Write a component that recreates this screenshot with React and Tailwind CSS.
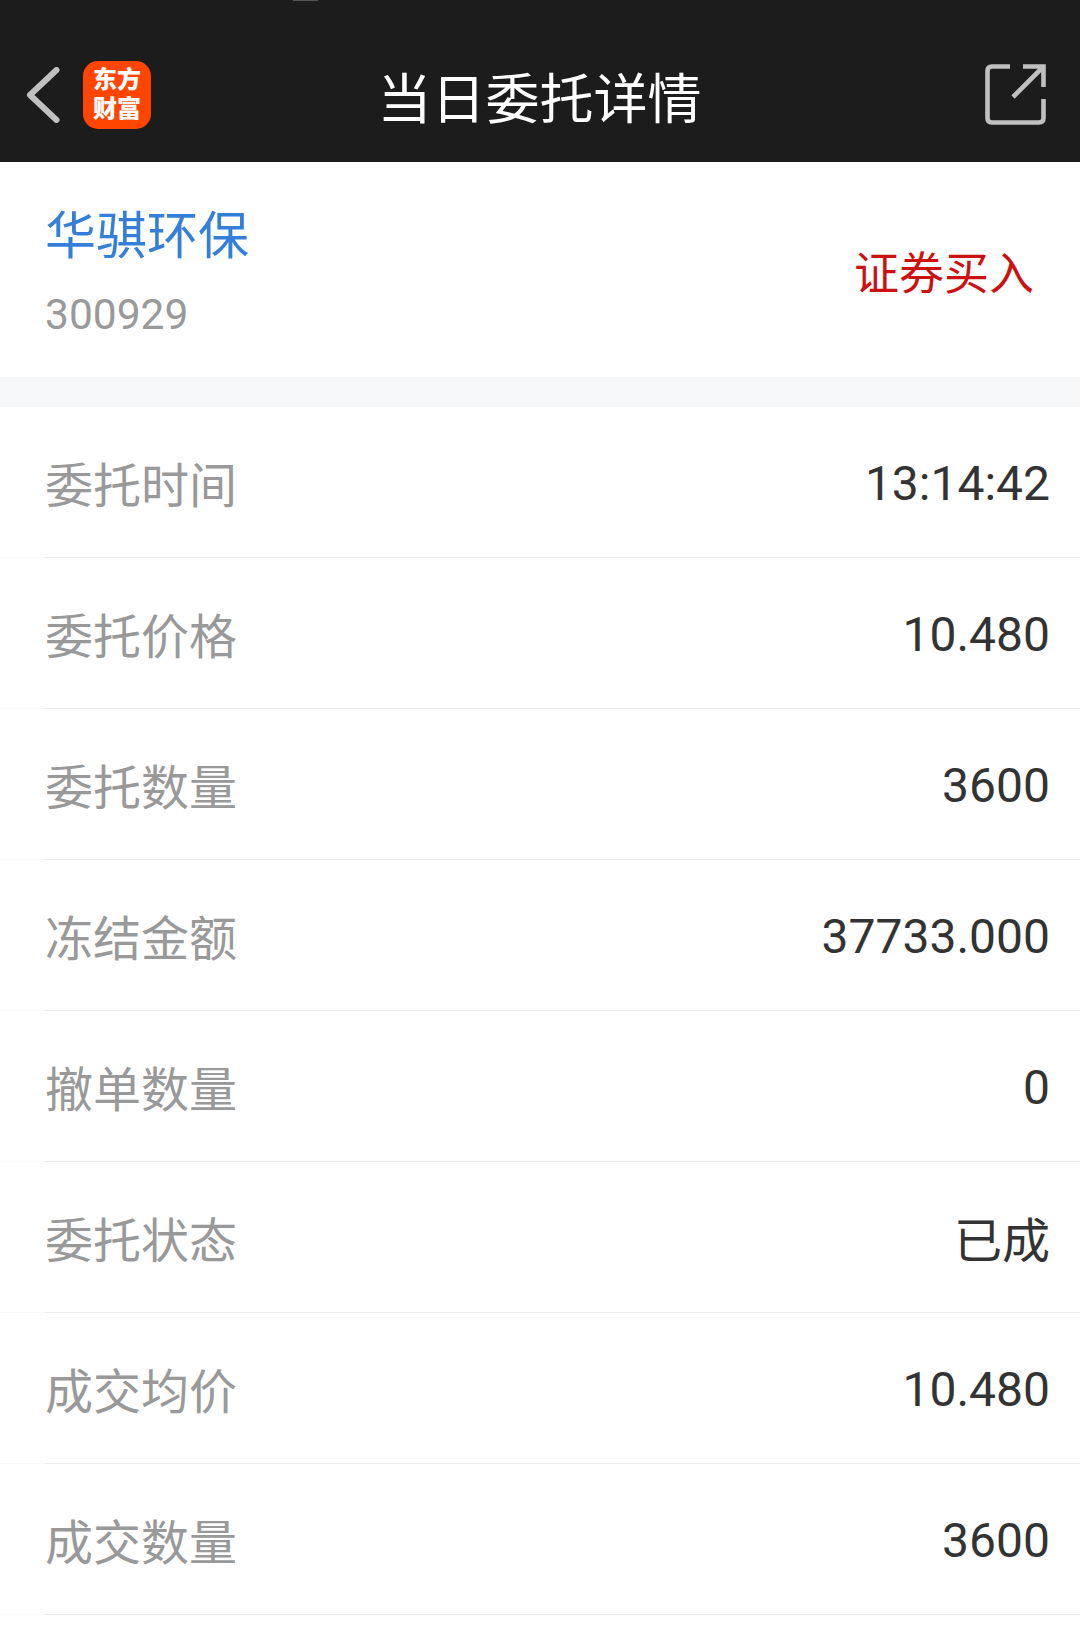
const rows = [
  { label: "委托时间", value: "13:14:42" },
  { label: "委托价格", value: "10.480" },
  { label: "委托数量", value: "3600" },
  { label: "冻结金额", value: "37733.000" },
  { label: "撤单数量", value: "0" },
  { label: "委托状态", value: "已成", isText: true },
  { label: "成交均价", value: "10.480" },
  { label: "成交数量", value: "3600" },
]

const Header = () => (
  <header className="relative flex h-[162px] items-center justify-between bg-[#1c1c1c] pt-[27px] pr-[34px] pl-[26px]">
    <div className="absolute top-0 left-[293px] h-px w-[25px] bg-[#555]" />
    <div className="flex items-center gap-[23px]">
      <svg className="h-[56px] w-[34px]" viewBox="0 0 34 56" fill="none" stroke="#c0c0c0" strokeWidth="6">
        <path d="M30.5 3L4 28L30.5 53" strokeLinejoin="round" strokeLinecap="round" />
      </svg>
      <div className="flex h-[68px] w-[68px] flex-col items-center justify-center rounded-[15px] bg-[#ff4500] text-[24px] leading-[29px] font-black text-white">
        <span>东方</span>
        <span>财富</span>
      </div>
    </div>
    <h1 className="absolute inset-x-0 top-[61px] pr-px text-center text-[54px] leading-[80px] text-white">当日委托详情</h1>
    <svg className="h-[61px] w-[61px]" viewBox="0 0 61 61" fill="none" stroke="#c0c0c0" strokeWidth="4.6">
      <path d="M25 2.5H7Q2.5 2.5 2.5 7V54Q2.5 58.5 7 58.5H54Q58.5 58.5 58.5 54V35" />
      <path d="M38 2.5H58.5V23M57 4L28 33" />
    </svg>
  </header>
)

const App = () => {
  return (
    <div className="h-[1638px] overflow-hidden bg-white font-[Roboto,'Noto_Sans_CJK_SC',sans-serif]">
      <Header />
      <section className="flex h-[215px] items-center justify-between pr-[46px] pl-[45px]">
        <div className="pt-[14px]">
          <h2 className="text-[51px] leading-[76px] text-[#3480d8]">华骐环保</h2>
          <p className="text-[42.5px] leading-[79px] text-[#999]">300929</p>
        </div>
        <span className="pt-[10px] text-[45px] text-[#cc1111]">证券买入</span>
      </section>
      <div className="h-[30px] bg-[#f7f8fa]" />
      <ul>
        {rows.map((row) => (
          <li key={row.label} className="flex h-[151px]">
            <div className="w-[45px] border-b border-[#f8f8f8]" />
            <div className="flex flex-1 items-center justify-between border-b border-[#ececec] pt-1 pr-[30px] text-[48px] leading-[64px]">
              <span className="pt-[5px] text-[#999]">{row.label}</span>
              <span className={row.isText ? "pt-[5px] text-[#333]" : "text-[#333]"}>{row.value}</span>
            </div>
          </li>
        ))}
      </ul>
    </div>
  )
}

export default App
